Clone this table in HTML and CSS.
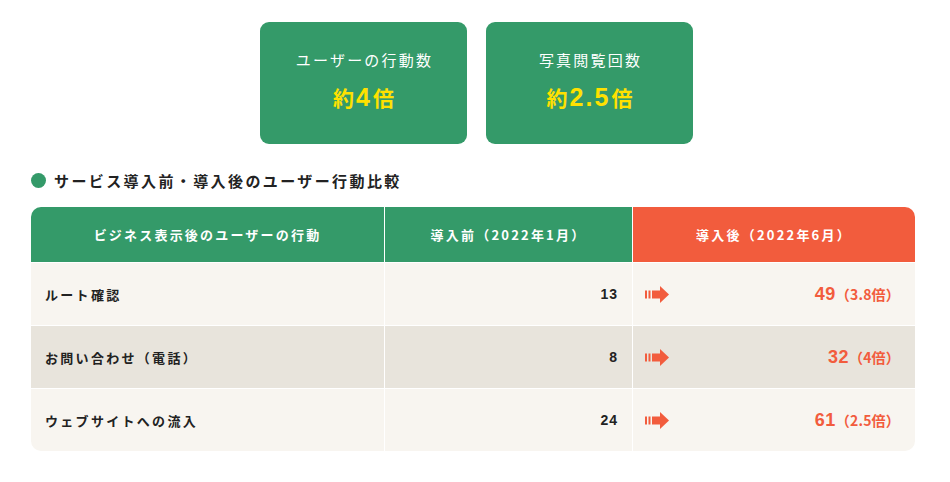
FILE: index.html
```html
<!DOCTYPE html>
<html lang="ja">
<head>
<meta charset="utf-8">
<link rel="stylesheet" href="styles.css">
</head>
<body>
<div class="page">
  <div class="cards">
    <div class="card">
      <div class="card-label">ユーザーの行動数</div>
      <div class="card-value"><span class="kanji">約</span><span class="num">4</span><span class="kanji">倍</span></div>
    </div>
    <div class="card">
      <div class="card-label">写真閲覧回数</div>
      <div class="card-value"><span class="kanji">約</span><span class="num">2.5</span><span class="kanji">倍</span></div>
    </div>
  </div>

  <h2 class="heading"><span class="dot"></span>サービス導入前・導入後のユーザー行動比較</h2>

  <div class="table">
    <div class="th">ビジネス表示後のユーザーの行動</div>
    <div class="th">導入前（2022年1月）</div>
    <div class="th th-after">導入後（2022年6月）</div>

    <div class="td label">ルート確認</div>
    <div class="td before">13</div>
    <div class="td after">
      <svg class="arrow" width="25" height="17" viewBox="0 0 25 17"><rect x="0" y="4.5" width="2" height="8" fill="#f25c3d"/><rect x="3.5" y="4.5" width="2" height="8" fill="#f25c3d"/><rect x="7" y="4.5" width="9" height="8" fill="#f25c3d"/><polygon points="15,0 24,8.5 15,17" fill="#f25c3d"/></svg>
      <span class="result"><span class="big">49</span><span class="small">（3.8倍）</span></span>
    </div>

    <div class="td label alt">お問い合わせ（電話）</div>
    <div class="td before alt">8</div>
    <div class="td after alt">
      <svg class="arrow" width="25" height="17" viewBox="0 0 25 17"><rect x="0" y="4.5" width="2" height="8" fill="#f25c3d"/><rect x="3.5" y="4.5" width="2" height="8" fill="#f25c3d"/><rect x="7" y="4.5" width="9" height="8" fill="#f25c3d"/><polygon points="15,0 24,8.5 15,17" fill="#f25c3d"/></svg>
      <span class="result"><span class="big">32</span><span class="small">（4倍）</span></span>
    </div>

    <div class="td label">ウェブサイトへの流入</div>
    <div class="td before">24</div>
    <div class="td after">
      <svg class="arrow" width="25" height="17" viewBox="0 0 25 17"><rect x="0" y="4.5" width="2" height="8" fill="#f25c3d"/><rect x="3.5" y="4.5" width="2" height="8" fill="#f25c3d"/><rect x="7" y="4.5" width="9" height="8" fill="#f25c3d"/><polygon points="15,0 24,8.5 15,17" fill="#f25c3d"/></svg>
      <span class="result"><span class="big">61</span><span class="small">（2.5倍）</span></span>
    </div>
  </div>
</div>
</body>
</html>
```

FILE: styles.css
```css
* { box-sizing: border-box; }
html, body {
  margin: 0;
  padding: 0;
  background: #ffffff;
}
body {
  font-family: "Noto Sans CJK JP", "Noto Sans", sans-serif;
  color: #222222;
}
.page {
  width: 884px;
  margin-left: 31px;
  padding-top: 22px;
}
.cards {
  display: flex;
  justify-content: center;
  gap: 19px;
  padding-left: 7px;
}
.card {
  width: 207px;
  height: 122px;
  background: #349a69;
  border-radius: 9px;
  display: flex;
  flex-direction: column;
  align-items: center;
  padding-top: 26px;
}
.card-label {
  color: #ffffff;
  font-size: 15px;
  letter-spacing: 2.2px;
  line-height: 24px;
  padding-left: 2px;
}
.card-value {
  color: #ffe100;
  font-weight: 700;
  line-height: 34px;
  margin-top: 8px;
  display: flex;
  align-items: baseline;
}
.card-value .kanji { font-size: 21px; }
.card-value .num {
  font-family: "Liberation Sans", "Noto Sans", sans-serif;
  font-size: 25px;
  letter-spacing: 2px;
  margin: 0 1px 0 2px;
}
.heading {
  display: flex;
  align-items: center;
  margin: 23px 0 0 0;
  height: 26px;
  font-size: 15px;
  font-weight: 700;
  letter-spacing: 2.4px;
  color: #222222;
}
.dot {
  width: 15px;
  height: 15px;
  border-radius: 50%;
  background: #349a69;
  margin-right: 8px;
}
.table {
  margin-top: 14px;
  display: grid;
  grid-template-columns: 353px 247px 282px;
  grid-template-rows: 55px 62px 62px 62px;
  gap: 1px;
  background: #ffffff;
  border-radius: 10px;
  overflow: hidden;
}
.th {
  background: #349a69;
  color: #ffffff;
  font-size: 13px;
  font-weight: 700;
  letter-spacing: 2.2px;
  display: flex;
  align-items: center;
  justify-content: center;
}
.th-after { background: #f25c3d; }
.td {
  background: #f8f5f0;
  display: flex;
  align-items: center;
  font-size: 13px;
  font-weight: 700;
}
.td.alt { background: #e8e4dc; }
.label {
  padding-left: 14px;
  letter-spacing: 2.3px;
}
.before {
  justify-content: flex-end;
  padding-right: 14px;
  font-family: "Liberation Sans", "Noto Sans", sans-serif;
  font-size: 14px;
  letter-spacing: 1px;
}
.after {
  padding: 0 15px 0 12px;
  justify-content: space-between;
}
.arrow { display: block; }
.result {
  color: #f25c3d;
  display: flex;
  align-items: baseline;
}
.result .big {
  font-family: "Liberation Sans", "Noto Sans", sans-serif;
  font-size: 18px;
  letter-spacing: 0.5px;
}
.result .small {
  font-size: 14px;
  letter-spacing: 0.2px;
}
```
